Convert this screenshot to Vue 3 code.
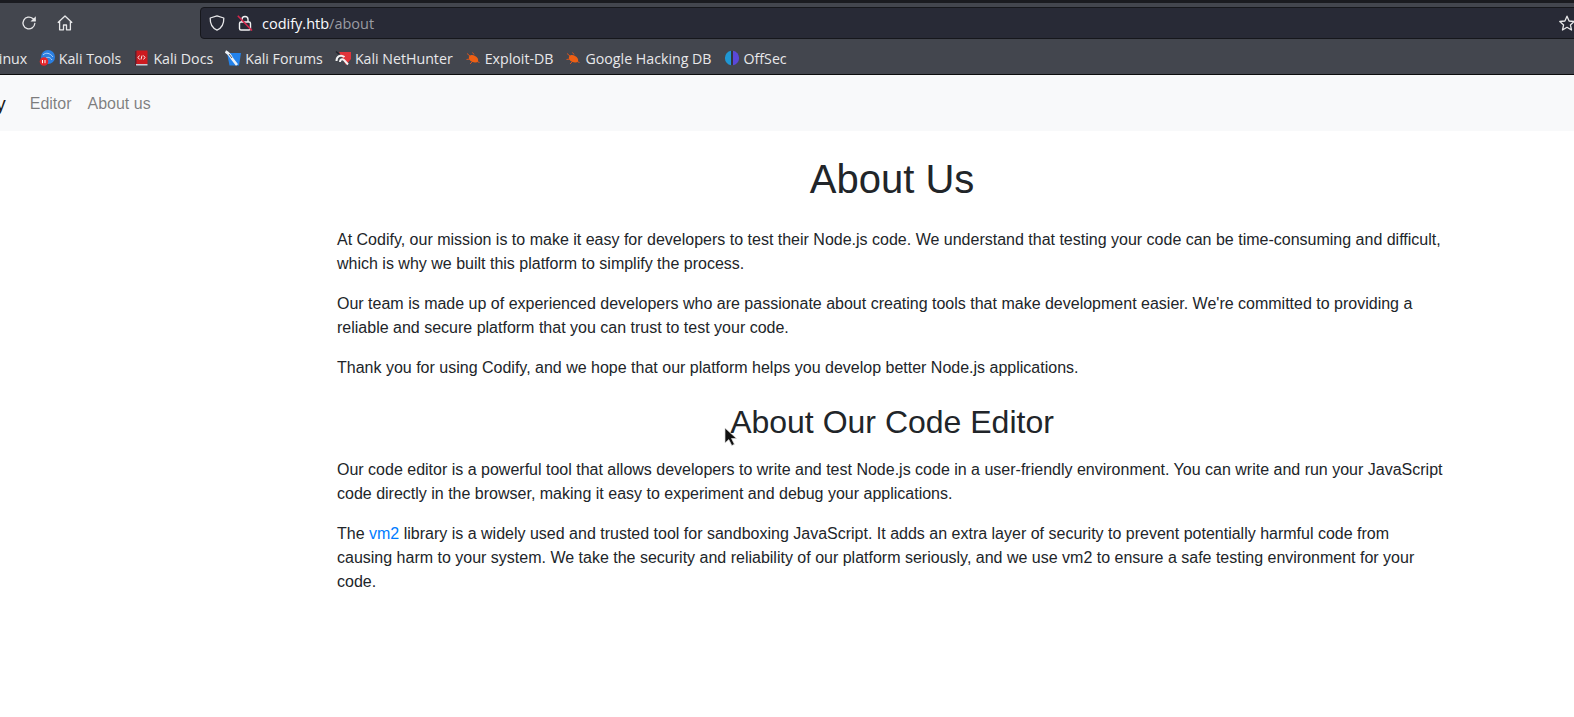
<template>
  <div class="screen">
    <!-- Browser chrome -->
    <div class="tabstrip"></div>
    <div class="toolbar">
      <div class="nav-buttons">
        <svg class="tool-icon" viewBox="0 0 16 16" fill="none" stroke="#e8e8ea" stroke-width="1.300">
          <path d="M13.800 8.500a5.900 5.900 0 1 1-2-5l2 1.800" stroke-linecap="round" />
          <path d="M14.800 1.200v5.300H9.500z" fill="#e8e8ea" stroke="none" />
        </svg>
        <svg class="tool-icon" viewBox="0 0 16 16" fill="none" stroke="#e8e8ea" stroke-width="1.300" stroke-linejoin="round">
          <path d="M.8 7.800 8 1l7.200 6.800M2.600 6.500v8.300h3.900V10h3v4.800h3.900V6.500" />
        </svg>
      </div>
      <div class="urlbar">
        <svg class="shield" viewBox="0 0 16 16" fill="none" stroke="#e8e8ea" stroke-width="1.300" stroke-linejoin="round">
          <path d="M8 .9 14.800 3c.2 5.900-2 10-6.800 12.100C3.200 13 1 8.900 1.200 3z" />
        </svg>
        <svg class="lock" viewBox="0 0 16 16" fill="none">
          <rect x="2.500" y="7" width="11" height="8" rx="1.500" stroke="#f1f1f3" stroke-width="1.400" />
          <path d="M5 7V4.500a3 3 0 0 1 6 0V7" stroke="#f1f1f3" stroke-width="1.400" />
          <path d="M.8.8 15 15.500" stroke="#d7264c" stroke-width="1.600" />
        </svg>
        <span class="url"><span class="url-host">codify.htb</span><span class="url-path">/about</span></span>
        <svg class="star" viewBox="0 0 16 16" fill="none" stroke="#e8e8ea" stroke-width="1.300" stroke-linejoin="round">
          <path d="M8 1.200 10.100 6l5.100.5-3.800 3.400 1.100 5.100L8 12.300 3.500 15l1.100-5.100L.8 6.500 5.900 6z" />
        </svg>
      </div>
    </div>
    <div class="bookmarks">
      <span class="bookmark first">Kali Linux</span>
      <span v-for="b in bookmarks" :key="b.label" class="bookmark">
        <svg class="bm-icon" viewBox="0 0 16 16" v-html="b.icon"></svg>
        {{ b.label }}
      </span>
    </div>

    <!-- Page -->
    <nav class="navbar">
      <a class="brand">Codify</a>
      <a class="nav-link">Editor</a>
      <a class="nav-link">About us</a>
    </nav>
    <main class="container">
      <h1>About Us</h1>
      <p>At Codify, our mission is to make it easy for developers to test their Node.js code. We understand that testing your code can be time-consuming and difficult, which is why we built this platform to simplify the process.</p>
      <p>Our team is made up of experienced developers who are passionate about creating tools that make development easier. We're committed to providing a reliable and secure platform that you can trust to test your code.</p>
      <p>Thank you for using Codify, and we hope that our platform helps you develop better Node.js applications.</p>
      <h2>About Our Code Editor</h2>
      <p>Our code editor is a powerful tool that allows developers to write and test Node.js code in a user-friendly environment. You can write and run your JavaScript code directly in the browser, making it easy to experiment and debug your applications.</p>
      <p>The <a class="link">vm2</a> library is a widely used and trusted tool for sandboxing JavaScript. It adds an extra layer of security to prevent potentially harmful code from causing harm to your system. We take the security and reliability of our platform seriously, and we use vm2 to ensure a safe testing environment for your code.</p>
    </main>

    <!-- Mouse pointer -->
    <svg class="cursor" viewBox="0 0 14 20">
      <path d="M1 1v15l3.800-3.400 3 6 2.600-1.300-2.900-5.800H12.500z" fill="#111" stroke="#ddd" stroke-width="0.700" />
    </svg>
  </div>
</template>

<script setup>
// Exploit-DB and GHDB share the same blurry orange bug
const bug = '<path d="M2 3.500 5 6M1.500 9.500 5 9M5 14l3-3M14.500 12.500 11 11M9 4.500 7.500 2.500" stroke="#d9541e" stroke-width="1" fill="none"/><ellipse cx="8.500" cy="8.800" rx="5" ry="3.300" fill="#ee5f14" transform="rotate(28 8.500 8.800)"/>'

const bookmarks = [
  {
    label: 'Kali Tools',
    icon: '<circle cx="9" cy="7" r="7" fill="#2b7fe0"/><path d="M4 5c3-3 7-2 10 2M7 8c2-1 4-1 6 2" stroke="#cfe3ff" stroke-width="0.800" fill="none"/><circle cx="5" cy="11.500" r="4.300" fill="#e5262b"/><path d="M3.500 10v3.200M6 10v3.200" stroke="#fff"/>',
  },
  {
    label: 'Kali Docs',
    icon: '<rect x="2" y="1" width="2" height="15" fill="#5a2230"/><rect x="3.500" y="0.500" width="11" height="13.500" fill="#cc1a1f"/><rect x="3" y="14" width="11.500" height="1.500" fill="#c9ccd6"/><path d="M6.500 5.500 5 7.500l1.500 2M10.500 5.500l1.500 2-1.500 2M9 5.500l-1 4" stroke="#fff" stroke-width="0.900" fill="none"/>',
  },
  {
    label: 'Kali Forums',
    icon: '<path d="M2 3h14l-2 12.500H4.500z" fill="#2382ea"/><path d="M0.500 1.500c3 1.500 5 4 6.500 7l5 6.500" stroke="#eef2f6" stroke-width="2.600" fill="none"/><path d="M4 4l3 4" stroke="#2c3038" stroke-width="0.800"/>',
  },
  {
    label: 'Kali NetHunter',
    icon: '<path d="M4 2h12v7l-5 6z" fill="#e2343b"/><path d="M1.500 11c0-4.500 4-7 8-4M5 12c0-2.500 2-3.500 4-2l4 4.500" stroke="#f3f3f3" stroke-width="2" fill="none"/><path d="M1 1.500l3 2.500" stroke="#20222a" stroke-width="1.600"/>',
  },
  { label: 'Exploit-DB', icon: bug },
  { label: 'Google Hacking DB', icon: bug },
  {
    label: 'OffSec',
    icon: '<path d="M7 .8a7.300 7.300 0 0 0 0 14.400z" fill="#1f97d4"/><path d="M9 .8a7.300 7.300 0 0 1 0 14.400z" fill="#5a48d8"/><path d="M8 1v14" stroke="#23262e"/>',
  },
]
</script>

<style>
html,
body {
  margin: 0;
  background: #fff;
}
</style>

<style scoped>
.screen {
  position: relative;
  width: 1574px;
  height: 717px;
  overflow: hidden;
  background: #fff;
  font-family: "Liberation Sans", Arial, sans-serif;
  color: #212529;
}

.tabstrip {
  height: 3px;
  background: #1a1b20;
}

.toolbar {
  display: flex;
  align-items: center;
  height: 37px;
  box-sizing: border-box;
  padding-top: 3px;
  background: #43464e;
}

.nav-buttons {
  display: flex;
  gap: 20px;
  width: 200px;
  padding-left: 21px;
  box-sizing: border-box;
}

.tool-icon {
  width: 16px;
  height: 16px;
}

.urlbar {
  display: flex;
  align-items: center;
  flex: 1;
  height: 32px;
  box-sizing: border-box;
  margin-right: -2px;
  padding-left: 8px;
  background: #282a36;
  border: 1px solid #16171c;
  border-radius: 4px 0 0 4px;
  font-family: "Open Sans", sans-serif;
  font-size: 14.500px;
}

.shield {
  width: 16px;
  height: 16px;
}

.lock {
  width: 16px;
  height: 16px;
  margin-left: 12px;
}

.url {
  margin-left: 9px;
}

.url-host {
  color: #fbfbfe;
}

.url-path {
  color: #9a9ca3;
}

.star {
  width: 16px;
  height: 16px;
  margin-left: auto;
  margin-right: 0;
}

.bookmarks {
  display: flex;
  align-items: center;
  height: 35px;
  box-sizing: border-box;
  padding-top: 2px;
  border-bottom: 1px solid #0c0c0d;
  background: #43464e;
  color: #e8e8ea;
  font-family: "Open Sans", sans-serif;
  font-size: 14.200px;
  white-space: nowrap;
}

.bookmark {
  display: flex;
  align-items: center;
  gap: 4px;
  margin-right: 12px;
}

.bookmark.first {
  margin-left: -36px;
  margin-right: 11.500px;
}

.bm-icon {
  width: 16px;
  height: 16px;
}

.navbar {
  display: flex;
  align-items: center;
  height: 56px;
  box-sizing: border-box;
  padding: 2px 0 0 9px;
  background: #f8f9fa;
}

.brand {
  margin-left: -60px;
  margin-right: 24px;
  font-size: 20px;
  color: rgba(0, 0, 0, 0.9);
}

.nav-link {
  margin-right: 16px;
  font-size: 16px;
  color: rgba(0, 0, 0, 0.5);
}

.container {
  box-sizing: border-box;
  width: 1140px;
  margin-left: 322px;
  padding: 24px 15px 0;
  line-height: 24px;
  font-size: 16px;
}

h1,
h2 {
  margin: 0;
  font-weight: 500;
  line-height: 1.2;
  text-align: center;
}

h1 {
  margin-bottom: 25px;
  font-size: 40px;
}

h2 {
  margin: 23px 0 17px;
  font-size: 32px;
}

p {
  margin: 0 0 16px;
}

.link {
  color: #007bff;
}

.cursor {
  position: absolute;
  left: 724px;
  top: 427px;
  width: 14px;
  height: 20px;
}
</style>
